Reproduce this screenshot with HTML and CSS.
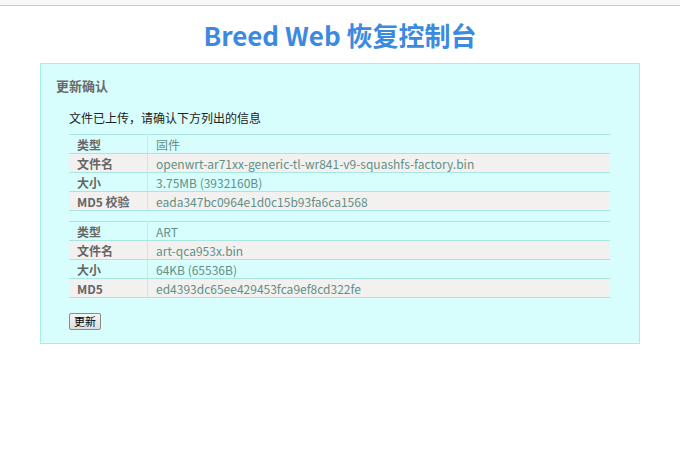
FILE: index.html
```html
<!DOCTYPE html>
<html lang="zh-CN">
<head>
<meta charset="utf-8">
<title>Breed Web 恢复控制台</title>
<link rel="stylesheet" href="styles.css">
</head>
<body>
<div class="topbar"></div>
<h1 class="title">Breed Web 恢复控制台</h1>
<div class="panel">
  <div class="panel-title">更新确认</div>
  <div class="panel-body">
    <p class="intro">文件已上传，请确认下方列出的信息</p>
    <table class="info">
      <tr><th>类型</th><td>固件</td></tr>
      <tr class="alt"><th>文件名</th><td>openwrt-ar71xx-generic-tl-wr841-v9-squashfs-factory.bin</td></tr>
      <tr><th>大小</th><td>3.75MB (3932160B)</td></tr>
      <tr class="alt"><th>MD5 校验</th><td>eada347bc0964e1d0c15b93fa6ca1568</td></tr>
    </table>
    <table class="info">
      <tr><th>类型</th><td>ART</td></tr>
      <tr class="alt"><th>文件名</th><td>art-qca953x.bin</td></tr>
      <tr><th>大小</th><td>64KB (65536B)</td></tr>
      <tr class="alt"><th>MD5</th><td>ed4393dc65ee429453fca9ef8cd322fe</td></tr>
    </table>
    <button class="btn" type="button">更新</button>
  </div>
</div>
</body>
</html>
```
FILE: styles.css
```css
html, body {
  margin: 0;
  padding: 0;
  background: #ffffff;
  font-family: "Noto Sans CJK SC", "Open Sans", sans-serif;
  font-size: 12px;
  color: #333;
}
.topbar {
  height: 5px;
  background: #f8f8f8;
  border-bottom: 1px solid #c8c8c8;
}
.title {
  margin: 12px 0 0;
  height: 45px;
  line-height: 34px;
  text-align: center;
  font-size: 26px;
  font-weight: bold;
  color: #3c8ae0;
}
.panel {
  width: 598px;
  margin: 0 0 0 40px;
  background: #d8fdfd;
  border: 1px solid #a6eee4;
  padding-bottom: 13px;
}
.panel-title {
  padding: 13px 0 0 15px;
  height: 33px;
  line-height: 18px;
  font-size: 13px;
  font-weight: bold;
  color: #6a6a6a;
}
.panel-body {
  padding: 0 29px 0 28px;
}
.intro {
  margin: 0 0 8px;
  line-height: 16px;
  color: #222;
}
.info {
  width: 100%;
  table-layout: fixed;
  border-collapse: collapse;
  margin-bottom: 10px;
}
.info tr {
  height: 19px;
}
.info th, .info td {
  border-top: 1px solid #a8e6e0;
  border-bottom: 1px solid #a8e6e0;
  padding: 0 8px;
  line-height: 17px;
  text-align: left;
  white-space: nowrap;
}
.info th {
  width: 62px;
  font-weight: bold;
  color: #666;
  border-right: 1px solid #bfeee8;
}
.info td {
  color: #5f9187;
}
.info tr.alt th, .info tr.alt td {
  background: #f3f0f0;
}
.btn {
  display: block;
  margin-top: 15px;
  font-family: "Noto Sans CJK SC", sans-serif;
  font-size: 11px;
  line-height: 13px;
  padding: 1px 4px;
  color: #000;
  background: linear-gradient(#f6f6f6, #dddddd);
  border: 1px solid #8a8a8a;
  border-radius: 2px;
}
```
